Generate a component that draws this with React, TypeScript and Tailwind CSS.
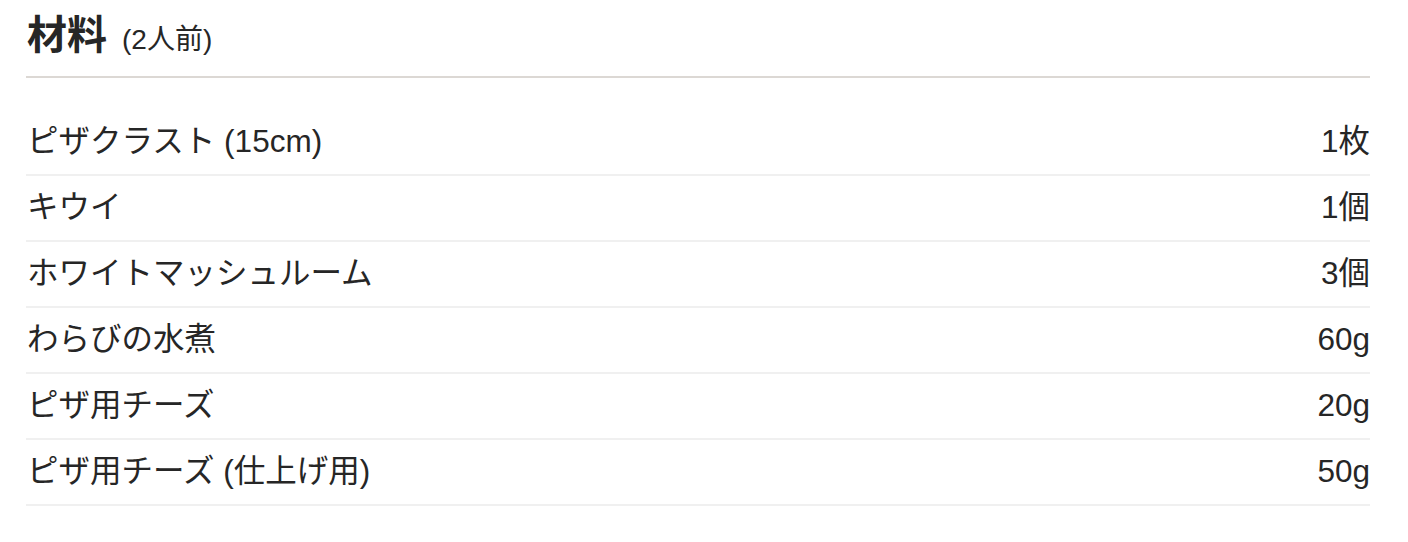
import React from "react";

const items: [string, string][] = [
  ["ピザクラスト (15cm)", "1枚"],
  ["キウイ", "1個"],
  ["ホワイトマッシュルーム", "3個"],
  ["わらびの水煮", "60g"],
  ["ピザ用チーズ", "20g"],
  ["ピザ用チーズ (仕上げ用)", "50g"],
];

export default function App() {
  return (
    <div
      className="w-[1408px] h-[542px] bg-white pl-[26px] pr-[38px] pt-[10px] text-[#262626]"
      style={{ fontFamily: '"Liberation Sans", "Noto Sans CJK JP", sans-serif' }}
    >
      <div className="flex items-baseline h-[68px] border-b-2 border-[#dcd8d4] pl-[1px]">
        <h2 className="text-[40px] font-bold leading-[50px]">材料</h2>
        <span className="ml-[15px] text-[28px]">(2人前)</span>
      </div>
      <ul className="mt-[32px]">
        {items.map(([name, qty]) => (
          <li
            key={name}
            className="flex justify-between items-center h-[66px] border-b-2 border-[#f0f0f0] text-[31.5px] pl-[1px]"
          >
            <span>{name}</span>
            <span>{qty}</span>
          </li>
        ))}
      </ul>
    </div>
  );
}
